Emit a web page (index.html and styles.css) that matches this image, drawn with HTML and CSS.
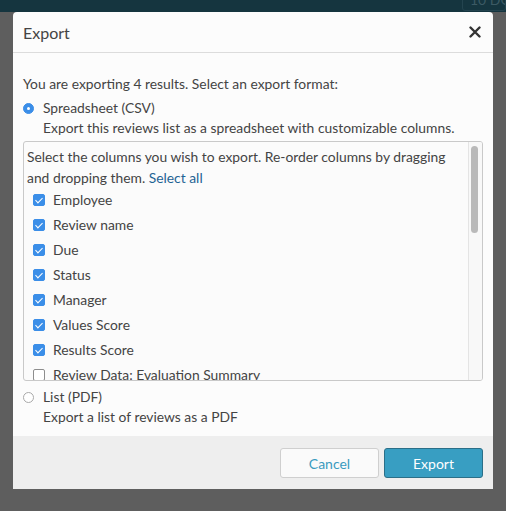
FILE: index.html
```html
<!DOCTYPE html>
<html lang="en">
<head>
  <meta charset="UTF-8">
  <title>Export</title>
  <link rel="stylesheet" href="styles.css">
</head>
<body>
  <div class="topbar">
    <span class="topbar-box">10 DO</span>
  </div>
  <div class="modal">
    <div class="modal-header">
      <h2>Export</h2>
      <svg class="close" width="12" height="12" viewBox="0 0 12 12">
        <path d="M1.5 1.5 L10.5 10.5 M10.5 1.5 L1.5 10.5" stroke="#333" stroke-width="2.4" stroke-linecap="round"/>
      </svg>
    </div>

    <div class="modal-body">
      <p class="intro">You are exporting 4 results. Select an export format:</p>

      <div class="option">
        <span class="radio checked"></span>
        <span>Spreadsheet (CSV)</span>
      </div>
      <p class="desc">Export this reviews list as a spreadsheet with customizable columns.</p>

      <div class="columns-box">
        <p class="hint">Select the columns you wish to export. Re-order columns by dragging and dropping them. <a href="#">Select all</a></p>
        <ul class="columns">
          <li><span class="check on"></span>Employee</li>
          <li><span class="check on"></span>Review name</li>
          <li><span class="check on"></span>Due</li>
          <li><span class="check on"></span>Status</li>
          <li><span class="check on"></span>Manager</li>
          <li><span class="check on"></span>Values Score</li>
          <li><span class="check on"></span>Results Score</li>
          <li><span class="check"></span>Review Data: Evaluation Summary</li>
        </ul>
        <div class="scrollbar"><div class="thumb"></div></div>
      </div>

      <div class="option pdf">
        <span class="radio"></span>
        <span>List (PDF)</span>
      </div>
      <p class="desc">Export a list of reviews as a PDF</p>
    </div>

    <div class="modal-footer">
      <button class="btn cancel">Cancel</button>
      <button class="btn primary">Export</button>
    </div>
  </div>
</body>
</html>
```

FILE: styles.css
```css
body {
  margin: 0;
  background-color: #5e5e5e;
  font-family: Lato, "Open Sans", sans-serif;
  color: #444;
  height: 511px;
  overflow: hidden;
}
.topbar {
  height: 12px;
  background-color: #15353f;
  position: relative;
}
.topbar-box {
  position: absolute;
  right: 0;
  top: -9px;
  width: 44px;
  height: 20px;
  border: 1px solid #24444f;
  border-radius: 3px;
  color: #3c5a64;
  font-size: 14px;
  line-height: 16px;
  padding-left: 7px;
  box-sizing: border-box;
  overflow: hidden;
  white-space: nowrap;
}
.modal {
  margin-left: 13px;
  width: 480px;
  background-color: #fcfcfc;
  border-radius: 4px 4px 0 0;
}
.modal-header {
  height: 40px;
  border-bottom: 1px solid #dcdcdc;
  display: flex;
  align-items: center;
  justify-content: space-between;
  padding: 0 12px 0 10px;
}
.modal-header h2 {
  margin: 0;
  font-size: 16px;
  font-weight: normal;
  color: #444;
}
.modal-body {
  padding: 21px 10px 9px 10px;
  font-size: 13.85px;
  line-height: 20px;
}
.intro {
  margin: 0 0 4px 0;
}
.option {
  display: flex;
  align-items: center;
  gap: 9px;
  height: 20px;
}
.desc {
  margin: 0 0 0 20px;
}
.radio {
  width: 11px;
  height: 11px;
  border-radius: 50%;
  border: 1px solid #a9a9a9;
  background-color: #fff;
  box-sizing: border-box;
  position: relative;
}
.radio.checked {
  background-color: #3b8ee8;
  border-color: #3b8ee8;
}
.radio.checked::after {
  content: "";
  position: absolute;
  left: 3px;
  top: 3px;
  width: 3px;
  height: 3px;
  border-radius: 50%;
  background-color: #fff;
}
.columns-box {
  position: relative;
  margin-top: 3px;
  height: 240px;
  border: 1px solid #c9c9c9;
  border-radius: 3px;
  box-sizing: border-box;
  overflow: hidden;
  padding: 4px 18px 0 3px;
  background-color: #fbfbfb;
}
.hint {
  margin: 0;
  line-height: 21px;
}
.hint a {
  color: #1f6394;
  text-decoration: none;
}
.columns {
  list-style: none;
  margin: 0;
  padding: 0;
}
.columns li {
  height: 25px;
  display: flex;
  align-items: center;
  gap: 8px;
  padding-left: 6px;
  white-space: nowrap;
}
.columns li:first-child {
  margin-top: -1px;
}
.check {
  width: 12px;
  height: 12px;
  border-radius: 2px;
  border: 1px solid #8d8d8d;
  background-color: #fff;
  box-sizing: border-box;
  position: relative;
  flex-shrink: 0;
}
.check.on {
  background-color: #3b8ee8;
  border-color: #3b8ee8;
}
.check.on::after {
  content: "";
  position: absolute;
  left: 3px;
  top: 1px;
  width: 3px;
  height: 6px;
  border: solid #fff;
  border-width: 0 1.6px 1.6px 0;
  transform: rotate(45deg);
}
.scrollbar {
  position: absolute;
  top: 0;
  right: 0;
  width: 13px;
  height: 100%;
  border-left: 1px solid #e4e4e4;
  background-color: #f8f8f8;
}
.thumb {
  margin: 4px 0 0 2px;
  width: 7px;
  height: 87px;
  border-radius: 4px;
  background-color: #b9b9b9;
}
.option.pdf {
  margin-top: 6px;
}
.modal-footer {
  height: 53px;
  background-color: #eeeeee;
  display: flex;
  justify-content: flex-end;
  align-items: flex-start;
  gap: 5px;
  padding: 12px 10px 0 0;
  box-sizing: border-box;
}
.btn {
  width: 99px;
  height: 30px;
  border-radius: 3px;
  font-family: Lato, "Open Sans", sans-serif;
  font-size: 14px;
  cursor: pointer;
}
.btn.cancel {
  background-color: #fafafa;
  border: 1px solid #cfcfcf;
  color: #3a9bbf;
}
.btn.primary {
  background-color: #389ec2;
  border: 1px solid #2b6f88;
  color: #fff;
}
```
